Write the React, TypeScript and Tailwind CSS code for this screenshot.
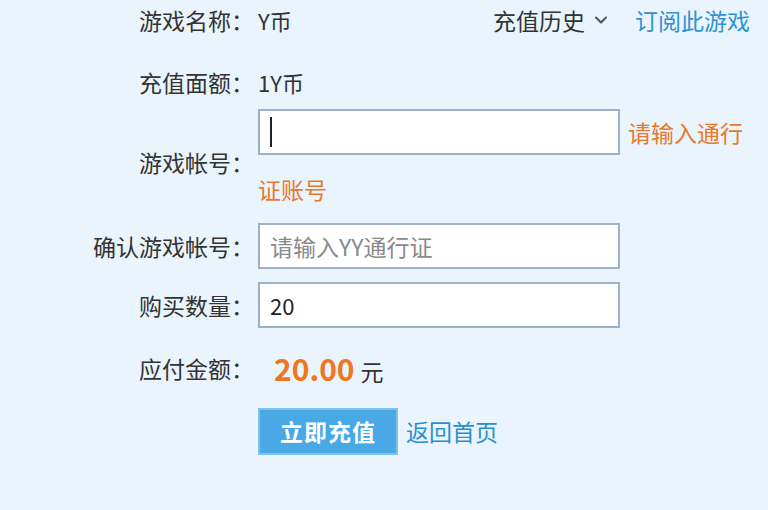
import { ChevronDown } from "lucide-react";

const FONT = { fontFamily: '"Noto Sans CJK SC", "Noto Sans", sans-serif' };

function Label({ children }: { children: React.ReactNode }) {
  return <div className="w-[254px] shrink-0 text-right text-[#333] text-[23px]">{children}</div>;
}

export default function App() {
  return (
    <div className="w-[768px] h-[510px] bg-[#eaf4fd] overflow-hidden flex flex-col" style={FONT}>
      {/* 游戏名称 */}
      <div className="flex items-center h-[40px]">
        <Label>游戏名称：</Label>
        <div className="flex-1 flex items-center justify-between pl-[4px] pr-[18px]">
          <span className="text-[22px] text-[#333]">Y币</span>
          <div className="flex items-center text-[23px]">
            <span className="text-[#333]">充值历史</span>
            <ChevronDown className="w-[20px] h-[20px] ml-[6px] text-[#555]" strokeWidth={2.5} />
            <a className="ml-[24px] text-[#2a93d4]">订阅此游戏</a>
          </div>
        </div>
      </div>

      {/* 充值面额 */}
      <div className="flex items-center h-[40px] mt-[22px]">
        <Label>充值面额：</Label>
        <span className="pl-[4px] text-[22px] text-[#333]">1Y币</span>
      </div>

      {/* 游戏帐号 */}
      <div className="flex items-center mt-[-2px]">
        <Label>
          <span className="relative top-[5px]">游戏帐号：</span>
        </Label>
        <div className="flex-1 pl-[4px] pr-[14px] leading-[57px] text-[23px] text-[#e8782a]">
          <span className="relative inline-block align-middle w-[362px] h-[46px] bg-white border-2 border-[#9db2c9]">
            <span className="absolute left-[10px] top-[6px] w-[2px] h-[30px] bg-[#222]" />
          </span>
          <span className="relative top-[4px] ml-[8px]">请输入通行证账号</span>
        </div>
      </div>

      {/* 确认游戏帐号 */}
      <div className="flex items-center h-[50px] mt-[7px]">
        <Label>确认游戏帐号：</Label>
        <div className="pl-[4px]">
          <input
            placeholder="请输入YY通行证"
            className="w-[362px] h-[46px] bg-white border-2 border-[#9db2c9] px-[10px] text-[23px] text-[#333] placeholder:text-[#8a8a8a] outline-none"
            style={FONT}
          />
        </div>
      </div>

      {/* 购买数量 */}
      <div className="flex items-center h-[50px] mt-[9px]">
        <Label>购买数量：</Label>
        <div className="pl-[4px]">
          <input
            defaultValue="20"
            className="w-[362px] h-[46px] bg-white border-2 border-[#9db2c9] px-[10px] text-[22px] text-[#222] outline-none"
            style={FONT}
          />
        </div>
      </div>

      {/* 应付金额 */}
      <div className="flex items-center h-[40px] mt-[18px]">
        <Label>应付金额：</Label>
        <div className="pl-[20px] flex items-baseline">
          <span className="text-[30px] font-bold text-[#f07622]">20.00</span>
          <span className="ml-[6px] text-[23px] text-[#333]">元</span>
        </div>
      </div>

      {/* 按钮 */}
      <div className="flex items-center h-[50px] mt-[18px]">
        <div className="w-[254px] shrink-0" />
        <div className="pl-[4px] flex items-center">
          <button
            className="w-[140px] h-[47px] bg-[#48a9e6] border-2 border-[#84bfe4] text-white text-[23px] font-bold tracking-[1px]"
            style={FONT}
          >
            立即充值
          </button>
          <a className="ml-[8px] text-[23px] text-[#2a8fd2]">返回首页</a>
        </div>
      </div>
    </div>
  );
}
